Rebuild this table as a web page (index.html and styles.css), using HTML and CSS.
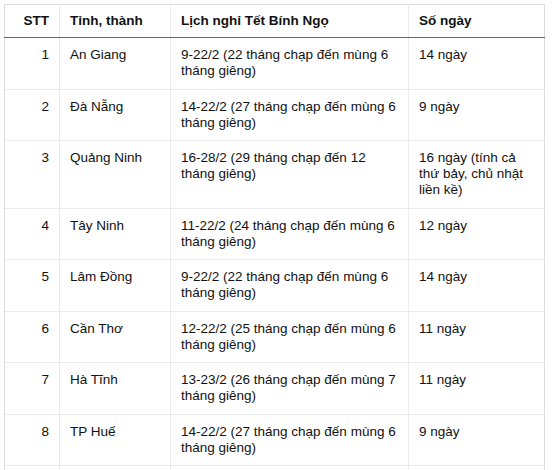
FILE: index.html
```html
<!DOCTYPE html>
<html lang="vi">
<head>
<meta charset="utf-8">
<title>Lịch nghỉ Tết Bính Ngọ</title>
<link rel="stylesheet" href="styles.css">
</head>
<body>
<div class="wrap">
<table class="tbl">
  <colgroup>
    <col class="c1"><col class="c2"><col class="c3"><col class="c4">
  </colgroup>
  <thead>
    <tr><th class="num">STT</th><th>Tỉnh, thành</th><th>Lịch nghỉ Tết Bính Ngọ</th><th>Số ngày</th></tr>
  </thead>
  <tbody>
    <tr><td class="num">1</td><td>An Giang</td><td>9-22/2 (22 tháng chạp đến mùng 6 tháng giêng)</td><td>14 ngày</td></tr>
    <tr><td class="num">2</td><td>Đà Nẵng</td><td>14-22/2 (27 tháng chạp đến mùng 6 tháng giêng)</td><td>9 ngày</td></tr>
    <tr><td class="num">3</td><td>Quảng Ninh</td><td>16-28/2 (29 tháng chạp đến 12 tháng giêng)</td><td>16 ngày (tính cả thứ bảy, chủ nhật liền kề)</td></tr>
    <tr><td class="num">4</td><td>Tây Ninh</td><td>11-22/2 (24 tháng chạp đến mùng 6 tháng giêng)</td><td>12 ngày</td></tr>
    <tr><td class="num">5</td><td>Lâm Đồng</td><td>9-22/2 (22 tháng chạp đến mùng 6 tháng giêng)</td><td>14 ngày</td></tr>
    <tr><td class="num">6</td><td>Cần Thơ</td><td>12-22/2 (25 tháng chạp đến mùng 6 tháng giêng)</td><td>11 ngày</td></tr>
    <tr><td class="num">7</td><td>Hà Tĩnh</td><td>13-23/2 (26 tháng chạp đến mùng 7 tháng giêng)</td><td>11 ngày</td></tr>
    <tr><td class="num">8</td><td>TP Huế</td><td>14-22/2 (27 tháng chạp đến mùng 6 tháng giêng)</td><td>9 ngày</td></tr>
    <tr><td class="num">&nbsp;</td><td>&nbsp;</td><td>&nbsp;<br>&nbsp;</td><td>&nbsp;</td></tr>
  </tbody>
</table>
</div>
</body>
</html>
```
FILE: styles.css
```css
html, body {
  margin: 0;
  padding: 0;
  background: #fff;
}
.wrap {
  padding: 4px 0 0 4px;
}
.tbl {
  width: 540px;
  border-collapse: collapse;
  table-layout: fixed;
  font-family: "Liberation Sans", Arial, sans-serif;
  font-size: 13.5px;
  line-height: 16px;
  color: #111;
  border: 1px solid #dcdcdc;
}
.c1 { width: 55px; }
.c2 { width: 111px; }
.c3 { width: 238px; }
.c4 { width: 136px; }
.tbl th {
  font-weight: bold;
  text-align: left;
  padding: 8px 10px;
  border-left: 1px solid #ebebeb;
  border-bottom: 1px solid #666;
}
.tbl td {
  text-align: left;
  vertical-align: top;
  padding: 9px 10px 9.5px;
  border-left: 1px solid #ebebeb;
  border-top: 1px solid #ebebeb;
}
.tbl th:first-child, .tbl td:first-child {
  border-left: 1px solid #dcdcdc;
}
.tbl .num {
  text-align: right;
}
```
